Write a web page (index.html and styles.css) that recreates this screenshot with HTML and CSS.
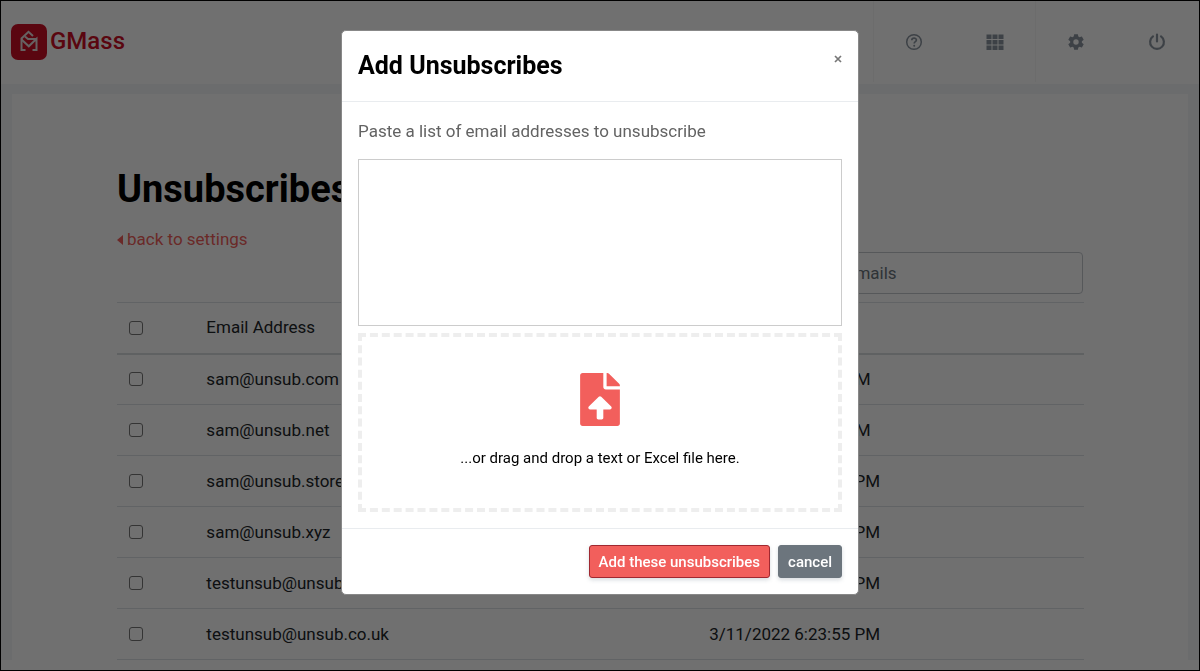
FILE: index.html
```html
<!DOCTYPE html>
<html lang="en">
<head>
<meta charset="utf-8">
<meta name="viewport" content="width=device-width, initial-scale=1">
<title>GMass – Unsubscribes</title>
<link rel="stylesheet" href="styles.css">
</head>
<body>
<div class="page">
  <header class="topbar">
    <a class="brand" href="#">
      <svg class="brand-mark" viewBox="0 0 36 36" aria-hidden="true">
        <rect width="36" height="36" rx="7" fill="#cc0f26"/>
        <g fill="none" stroke="#e8e0e0" stroke-width="2">
          <path d="M14.500 26H10.500V14.500L17.500 7.800L22 12"/>
          <path d="M10.500 15.500L17.800 22.300L25.500 14.800V26H21.500"/>
          <path d="M25.500 15H17L14 12.500"/>
        </g>
      </svg>
      <span>GMass</span>
    </a>
    <nav class="tools">
      <a class="tool tool-ruled" href="#" aria-label="Help">
        <svg viewBox="0 0 18 18" fill="none" stroke="currentColor" stroke-width="1.500">
          <circle cx="9" cy="9" r="7.300"/>
          <path d="M6.800 7.300C6.800 4.400 11.400 4.500 11.400 7.100C11.400 8.700 9.200 8.700 9.200 10.500" stroke-width="1.700"/>
          <circle cx="9.200" cy="12.700" r="1" fill="currentColor" stroke="none"/>
        </svg>
      </a>
      <a class="tool" href="#" aria-label="Apps">
        <svg viewBox="0 0 18 18" fill="currentColor">
          <path d="M.5 1.500h5v4.500h-5zM6.500 1.500h5v4.500h-5zM12.500 1.500h5v4.500h-5zM.5 7h5v4.500h-5zM6.500 7h5v4.500h-5zM12.500 7h5v4.500h-5zM.5 12.500h5v4.500h-5zM6.500 12.500h5v4.500h-5zM12.500 12.500h5v4.500h-5z"/>
        </svg>
      </a>
      <a class="tool tool-ruled" href="#" aria-label="Settings">
        <svg viewBox="1 1 22 22" fill="currentColor">
          <path d="M19.140 12.940c.04-.3.060-.61.060-.94s-.02-.64-.07-.94l2.030-1.580a.5.5 0 0 0 .12-.61l-1.920-3.320a.49.49 0 0 0-.59-.22l-2.390.96a7 7 0 0 0-1.620-.94l-.36-2.540A.48.48 0 0 0 13.920 2.400h-3.840a.47.47 0 0 0-.47.410l-.36 2.540c-.59.24-1.130.57-1.620.94l-2.390-.96a.48.48 0 0 0-.59.220L2.740 8.870a.48.48 0 0 0 .12.610l2.030 1.580a6 6 0 0 0 0 1.880l-2.030 1.580a.5.5 0 0 0-.12.610l1.920 3.320c.12.220.37.290.59.220l2.390-.96c.5.380 1.030.7 1.620.94l.36 2.540c.05.240.24.410.48.410h3.840c.24 0 .44-.17.470-.41l.36-2.540a7 7 0 0 0 1.620-.94l2.390.96c.22.080.47 0 .59-.22l1.920-3.320a.47.47 0 0 0-.12-.61zM12 15.300a3.300 3.300 0 1 1 0-6.600 3.300 3.300 0 0 1 0 6.600z"/>
        </svg>
      </a>
      <a class="tool" href="#" aria-label="Sign out">
        <svg viewBox="0 0 18 18" fill="none" stroke="currentColor" stroke-width="2.200">
          <path d="M5 3.400A6.900 6.900 0 1 0 13 3.400M9 1.500V8.500" stroke-linecap="round"/>
        </svg>
      </a>
    </nav>
  </header>

  <main class="panel">
    <h1 class="title">Unsubscribes</h1>
    <a class="back" href="#">
      <svg class="caret" viewBox="0 0 6 10" aria-hidden="true"><path d="M6 0V10L0 5z" fill="currentColor"/></svg>back to settings</a>
    <div class="search-row">
      <input class="search" type="text" placeholder="Search emails" aria-label="Search emails">
    </div>
    <table class="list">
      <thead>
        <tr><th class="pick"><input type="checkbox" aria-label="Select all"></th><th class="mail">Email Address</th><th>Date</th></tr>
      </thead>
      <tbody>
        <tr><td><input type="checkbox" aria-label="sam@unsub.com"></td><td>sam@unsub.com</td><td>3/9/2022 6:21:11 PM</td></tr>
        <tr><td><input type="checkbox" aria-label="sam@unsub.net"></td><td>sam@unsub.net</td><td>3/9/2022 6:21:11 PM</td></tr>
        <tr><td><input type="checkbox" aria-label="sam@unsub.store"></td><td>sam@unsub.store</td><td>3/11/2022 6:21:15 PM</td></tr>
        <tr><td><input type="checkbox" aria-label="sam@unsub.xyz"></td><td>sam@unsub.xyz</td><td>3/11/2022 6:21:15 PM</td></tr>
        <tr><td><input type="checkbox" aria-label="testunsub@unsub.com"></td><td>testunsub@unsub.com</td><td>3/11/2022 6:23:55 PM</td></tr>
        <tr><td><input type="checkbox" aria-label="testunsub@unsub.co.uk"></td><td>testunsub@unsub.co.uk</td><td>3/11/2022 6:23:55 PM</td></tr>
      </tbody>
    </table>
  </main>
</div>

<div class="backdrop">
  <section class="modal" role="dialog" aria-modal="true" aria-labelledby="modal-title">
    <header class="modal-head">
      <h2 class="modal-title" id="modal-title">Add Unsubscribes</h2>
      <button class="close" type="button" aria-label="Close">
        <svg viewBox="0 0 8 8" aria-hidden="true"><path d="M1 1L7 7M7 1L1 7" stroke="currentColor" stroke-width="1.700"/></svg>
      </button>
    </header>
    <div class="modal-body">
      <label class="label" for="addresses">Paste a list of email addresses to unsubscribe</label>
      <textarea class="addresses" id="addresses"></textarea>
      <div class="drop">
        <svg class="file" viewBox="0 0 384 512" aria-hidden="true"><path fill="#f25f5c" d="M224 136V0H24C10.700 0 0 10.700 0 24v464c0 13.300 10.700 24 24 24h336c13.300 0 24-10.700 24-24V160H248c-13.200 0-24-10.800-24-24zm65.180 216.010H224v80c0 8.840-7.160 16-16 16h-32c-8.840 0-16-7.160-16-16v-80H94.820c-14.280 0-21.410-17.290-11.270-27.360l96.420-95.700c6.650-6.610 17.390-6.610 24.040 0l96.420 95.700c10.150 10.070 3.030 27.360-11.250 27.360zM377 105L279.100 7c-4.500-4.500-10.600-7-17-7H256v128h128v-6.100c0-6.300-2.500-12.400-7-16.900z"/></svg>
        <p class="drop-text">...or drag and drop a text or Excel file here.</p>
      </div>
    </div>
    <footer class="modal-foot">
      <button class="btn btn-add" type="button">Add these unsubscribes</button>
      <button class="btn btn-cancel" type="button">cancel</button>
    </footer>
  </section>
</div>
</body>
</html>
```
FILE: styles.css
```css
* { box-sizing: border-box; }

body {
  margin: 0;
  height: 100vh;
  overflow: hidden;
  border: 1px solid #000;
  background: #fff;
  color: #212529;
  font: 17px/25px Roboto, "Liberation Sans", sans-serif;
}

h1, h2, p { margin: 0; }

.page { background: #f3f5f8; }

.topbar {
  display: flex;
  justify-content: space-between;
  height: 83px;
  padding: 0 2px 2px 10px;
  background: #fff;
}

.brand {
  display: flex;
  align-items: center;
  gap: 3px;
  color: #cc0f26;
  font-size: 24px;
  font-weight: 500;
  text-decoration: none;
}

.brand-mark { width: 36px; height: 36px; }

.tools { display: flex; }

.tool {
  display: flex;
  align-items: center;
  justify-content: center;
  width: 81px;
  color: #8b95a0;
}

.tool-ruled { border-left: 1px solid #f6f6f6; }

.tool svg { width: 18px; height: 18px; }

.panel {
  margin: 10px 11px 0;
  padding: 72px 104px 0 105px;
  background: #fff;
}

.title {
  color: #000;
  font-size: 38px;
  line-height: 46px;
}

.back {
  display: inline-flex;
  align-items: center;
  gap: 4px;
  margin-top: 15px;
  color: #f25f5c;
  text-decoration: none;
}

.caret { width: 6px; height: 10px; }

.search-row { display: flex; justify-content: flex-end; }

.search {
  width: 306px;
  height: 42px;
  margin-right: 1px;
  padding: 0 12px;
  border: 1px solid #c4c9ce;
  border-radius: 4px;
  background: #fff;
  font: inherit;
}

.search::placeholder { color: #6c757d; opacity: 1; }

.list {
  width: 100%;
  margin-top: 8px;
  border-collapse: collapse;
}

.list th, .list td {
  height: 51px;
  padding: 0 12px;
  border-top: 1px solid #dee2e6;
  text-align: left;
  font-weight: 400;
}

.list thead th { border-bottom: 2px solid #d8dce0; }
.list tbody tr:last-child td { border-bottom: 1px solid #dee2e6; }

.list .pick { width: 8%; }
.list .mail { width: 52%; }

.list input {
  display: block;
  appearance: none;
  width: 14px;
  height: 14px;
  margin: 0;
  border: 1px solid #767676;
  border-radius: 3px;
}

.backdrop {
  position: fixed;
  inset: 1px;
  padding: 29px 16px;
  background: rgba(0, 0, 0, 0.56);
}

.modal {
  max-width: 518px;
  margin: 0 auto;
  border: 1px solid #888;
  border-radius: 5px;
  background: #fff;
}

.modal-head {
  display: flex;
  justify-content: space-between;
  align-items: flex-start;
  padding: 16px;
  border-bottom: 1px solid #e9ecef;
}

.modal-title {
  color: #000;
  font-size: 25px;
  line-height: 38px;
}

.close {
  width: 8px;
  height: 8px;
  margin-top: 8px;
  padding: 0;
  border: 0;
  background: none;
  color: #777;
}

.close svg { display: block; width: 8px; height: 8px; }

.modal-body { padding: 17px 16px 16px; }

.label { display: block; margin-bottom: 15px; color: #636363; }

.addresses {
  display: block;
  width: 100%;
  height: 167px;
  padding: 8px;
  border: 1px solid #ccc;
  resize: none;
  font: inherit;
}

.drop {
  display: flex;
  flex-direction: column;
  align-items: center;
  gap: 20px;
  margin-top: 7px;
  padding: 36px 16px 38px;
  border: 4px dashed #eee;
  color: #000;
}

.file { width: 40px; height: 53px; }

.drop-text { font-size: 15px; line-height: 24px; }

.modal-foot {
  display: flex;
  justify-content: flex-end;
  gap: 8px;
  padding: 16px;
  border-top: 1px solid #e9ecef;
}

.btn {
  height: 33px;
  padding: 0 9px;
  border: 1px solid;
  border-radius: 3px;
  color: #fff;
  font: 500 15px/24px Roboto, "Liberation Sans", sans-serif;
  box-shadow: 0 2px 4px rgba(60, 80, 100, 0.2);
}

.btn-add { border-color: #a02830; background: #f25f5c; }
.btn-cancel { border-color: #6c757d; background: #6c757d; }
```
